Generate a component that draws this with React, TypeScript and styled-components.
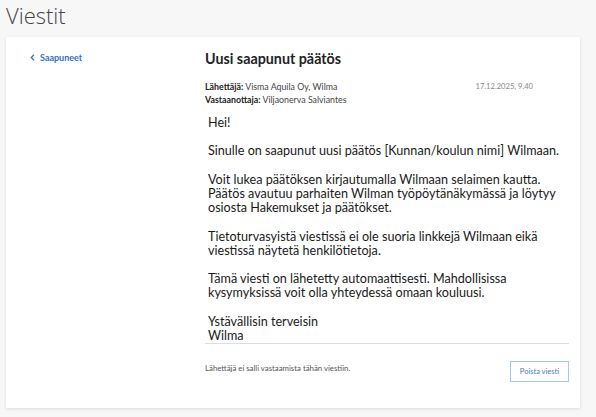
import React from 'react';
import styled, { createGlobalStyle } from 'styled-components';

const GlobalStyle = createGlobalStyle`
    html, body {
        margin: 0;
        padding: 0;
        background: #f7f7f7;
    }
    body {
        font-family: 'Lato', 'Noto Sans', sans-serif;
        color: #222;
    }
`;

const Page = styled.div`
    padding: 0 16px 9px 6px;
`;

const PageTitle = styled.h1`
    margin: 0 0 7px 0;
    font-family: 'Open Sans', sans-serif;
    font-weight: 300;
    font-size: 22px;
    line-height: 30px;
    color: #444;
`;

const Card = styled.div`
    display: flex;
    height: 371px;
    background: #fff;
    box-shadow: 0 1px 3px rgba(0, 0, 0, 0.12);
`;

const Nav = styled.nav`
    width: 199px;
    flex-shrink: 0;
    padding: 8px 0 0 24px;
    box-sizing: border-box;
`;

const BackLink = styled.a`
    display: inline-flex;
    align-items: center;
    gap: 5px;
    font-size: 9px;
    font-weight: 700;
    line-height: 13px;
    color: #3570c4;
    text-decoration: none;
`;

const Main = styled.main`
    width: 364px;
    padding-top: 12px;
`;

const Heading = styled.h2`
    margin: 0;
    font-size: 14.3px;
    line-height: 20px;
    font-weight: 700;
    color: #222;
`;

const Meta = styled.div`
    display: flex;
    justify-content: space-between;
    width: 328px;
    margin-top: 11px;
    font-size: 8.8px;
    line-height: 13px;
    color: #444;
`;

const MetaLabel = styled.b`
    color: #222;
`;

const DateText = styled.span`
    font-size: 7.6px;
    color: #888;
`;

const Body = styled.div`
    margin-top: 10px;
    padding-left: 3px;
    border-bottom: 1px solid #ddd;
    font-size: 12.6px;
    line-height: 14.2px;
    color: #1a1a1a;
    white-space: pre;
`;

const Footer = styled.div`
    display: flex;
    justify-content: space-between;
    align-items: flex-start;
    margin-top: 17px;
`;

const Notice = styled.span`
    padding-top: 2px;
    font-size: 7.8px;
    line-height: 11px;
    color: #555;
`;

const Button = styled.button`
    width: 59px;
    height: 21px;
    padding: 0;
    border: 1px solid #a9c7ea;
    background: #fff;
    font-family: inherit;
    font-size: 7.5px;
    color: #4f79b5;
`;

const bodyText = `Hei!

Sinulle on saapunut uusi päätös [Kunnan/koulun nimi] Wilmaan.

Voit lukea päätöksen kirjautumalla Wilmaan selaimen kautta.
Päätös avautuu parhaiten Wilman työpöytänäkymässä ja löytyy
osiosta Hakemukset ja päätökset.

Tietoturvasyistä viestissä ei ole suoria linkkejä Wilmaan eikä
viestissä näytetä henkilötietoja.

Tämä viesti on lähetetty automaattisesti. Mahdollisissa
kysymyksissä voit olla yhteydessä omaan kouluusi.

Ystävällisin terveisin
Wilma`;

const App: React.FC = () => {
    return (
        <Page>
            <GlobalStyle />
            <PageTitle>Viestit</PageTitle>

            <Card>
                <Nav>
                    <BackLink href="#">
                        <svg width="5" height="7" viewBox="0 0 5 7">
                            <path d="M4 0.8 L1.2 3.5 L4 6.2" fill="none" stroke="#3570c4" strokeWidth="1.2" />
                        </svg>
                        Saapuneet
                    </BackLink>
                </Nav>

                <Main>
                    <Heading>Uusi saapunut päätös</Heading>

                    <Meta>
                        <div>
                            <div><MetaLabel>Lähettäjä:</MetaLabel> Visma Aquila Oy, Wilma</div>
                            <div><MetaLabel>Vastaanottaja:</MetaLabel> Viljaonerva Salviantes</div>
                        </div>
                        <DateText>17.12.2025, 9.40</DateText>
                    </Meta>

                    <Body>{bodyText}</Body>

                    <Footer>
                        <Notice>Lähettäjä ei salli vastaamista tähän viestiin.</Notice>
                        <Button>Poista viesti</Button>
                    </Footer>
                </Main>
            </Card>
        </Page>
    );
};

export default App;
